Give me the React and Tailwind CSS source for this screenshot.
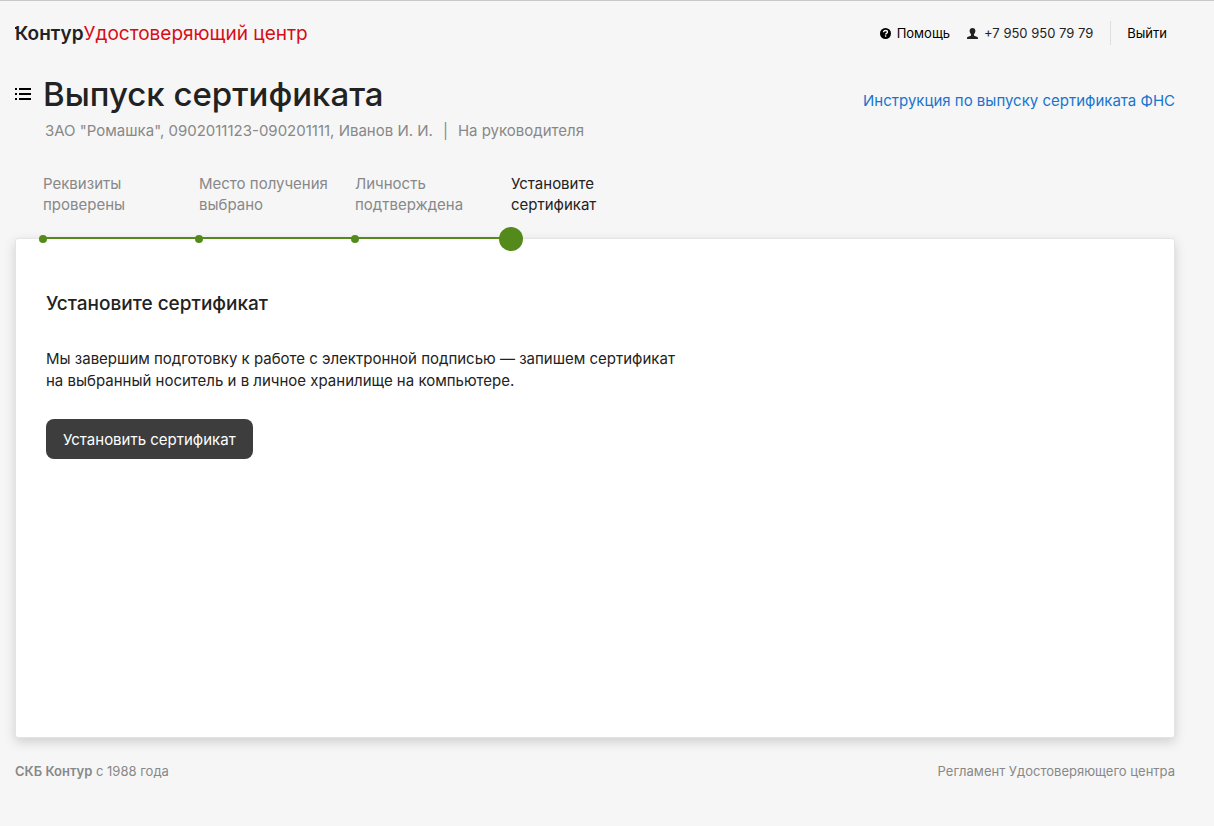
const STEPS = [
  { id: 'details', title: ['Реквизиты', 'проверены'], done: true },
  { id: 'place', title: ['Место получения', 'выбрано'], done: true },
  { id: 'identity', title: ['Личность', 'подтверждена'], done: true },
  { id: 'install', title: ['Установите', 'сертификат'], done: false },
];

function HelpIcon() {
  return (
    <svg width="11" height="11" viewBox="0 0 11 11" aria-hidden="true">
      <circle cx="5.5" cy="5.5" r="5.5" fill="#000" />
      <path d="M3.5 4.3C3.5 3.1 4.4 2.5 5.5 2.5s2 .6 2 1.6c0 1.3-1.9 1.2-1.9 2.5" fill="none" stroke="#fff" strokeWidth="1.3" />
      <rect x="4.9" y="7.3" width="1.4" height="1.4" fill="#fff" />
    </svg>
  );
}

function UserIcon() {
  return (
    <svg width="11" height="11" viewBox="0 0 11 11" fill="#222" aria-hidden="true">
      <path d="M5.5 0C3.7 0 2.6 1.1 2.6 2.8c0 1.5.7 2.7 1.4 3.5v1.1C3.5 8.3 0 8.200 0 10v1h11v-1c0-1.800-3.500-1.700-4-2.600V6.300c.7-.8 1.400-2 1.400-3.500C8.400 1.100 7.300 0 5.500 0z" />
    </svg>
  );
}

function ListIcon() {
  return (
    <svg width="16" height="12" viewBox="0 0 16 12" fill="#000" shapeRendering="crispEdges" aria-hidden="true">
      <path d="M0 0h2v2H0zM4 0h12v2H4zM0 5h2v2H0zM4 5h12v2H4zM0 10h2v2H0zM4 10h12v2H4z" />
    </svg>
  );
}

function Header() {
  return (
    <header className="flex h-16 items-center justify-between">
      <a href="#" className="flex items-baseline pt-[2px] text-[19px] leading-6">
        <span className="relative font-semibold text-[#222]">
          {/* small serif on the К */}
          <span className="absolute top-[5px] left-0 h-[2px] w-[3px] bg-[#222]" />
          Контур
        </span>
        <span className="text-[#d70c17]">Удостоверяющий центр</span>
      </a>
      <nav className="flex items-center text-[13px] leading-5 text-black">
        <a href="#" className="flex items-center gap-[6px]"><HelpIcon />Помощь</a>
        <button type="button" className="ml-[17px] flex items-center gap-[6px] text-[#222]"><UserIcon />+7 950 950 79 79</button>
        <a href="#" className="ml-[17px] border-l border-[#dedede] py-[2px] pr-2 pl-4">Выйти</a>
      </nav>
    </header>
  );
}

function Steps() {
  return (
    <ol className="flex pl-7">
      {STEPS.map((s, i) => (
        <li key={s.id} className={'relative h-[65px] w-[156px] leading-[21px] ' + (s.done ? 'text-[#888]' : 'text-[#222]')}>
          {s.title[0]}<br />{s.title[1]}
          {i < STEPS.length - 1 && <span className="absolute top-16 left-0 h-[2px] w-full bg-[#538a1b]" />}
          {s.done
            ? <span className="absolute top-[62px] -left-1 size-2 rounded-full bg-[#538a1b]" />
            : <span className="absolute top-[54px] -left-3 size-6 rounded-full bg-[#538a1b]" />}
        </li>
      ))}
    </ol>
  );
}

export default function App() {
  return (
    <div className="flex min-h-screen flex-col border-t border-[#c8c8c8] bg-[#f6f6f6] pr-[39px] pl-[15px] font-['Inter',sans-serif] text-[15px] text-[#222]">
      <Header />

      <div className="flex items-start justify-between pt-2">
        <div>
          <div className="flex items-center gap-3">
            <button type="button" aria-label="Меню"><ListIcon /></button>
            <h1 className="text-[33px] leading-[42px] font-medium">Выпуск сертификата</h1>
          </div>
          <p className="pl-[30px] leading-[31px] text-[#888]">
            ЗАО "Ромашка", 0902011123-090201111, Иванов И. И.
            <span className="mx-[10px]">|</span>
            На руководителя
          </p>
        </div>
        <a href="#" className="mt-4 leading-6 text-[#1874cf]">Инструкция по выпуску сертификата ФНС</a>
      </div>

      <div className="pt-[27px]"><Steps /></div>

      <main className="min-h-[500px] rounded-[3px] border border-[#e4e4e4] bg-white px-[30px] pt-[53px] shadow-[0_4px_12px_rgba(0,0,0,0.16)]">
        <h2 className="text-[19px] leading-6 font-medium">Установите сертификат</h2>
        <p className="mt-8 max-w-[640px] leading-[22px]">
          Мы завершим подготовку к работе с электронной подписью — запишем сертификат<br />
          на выбранный носитель и в личное хранилище на компьютере.
        </p>
        <button type="button" className="mt-[27px] h-10 rounded-lg bg-[#3d3d3d] px-[17px] pt-[2px] text-white">Установить сертификат</button>
      </main>

      <footer className="flex items-center justify-between pt-[23px] pb-8 text-[13px] leading-5 text-[#888]">
        <span><b className="font-semibold">СКБ Контур</b> с 1988 года</span>
        <a href="#">Регламент Удостоверяющего центра</a>
      </footer>
    </div>
  );
}
